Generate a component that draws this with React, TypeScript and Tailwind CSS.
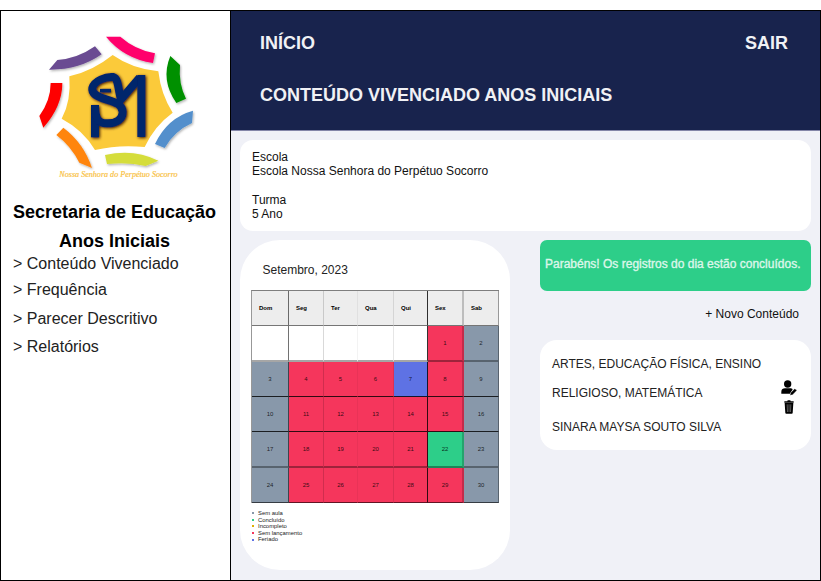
import React from "react";

const DAYS = ["Dom", "Seg", "Ter", "Qua", "Qui", "Sex", "Sab"];

const COL_BORDER = [
  "border-r border-r-black/55",
  "border-r border-r-black/15",
  "border-r border-r-black/5",
  "border-r border-r-black/10",
  "border-r border-r-black/80",
  "border-r-2 border-r-black/20",
  "border-r border-r-black/35",
];

const ROW_BORDER = [
  "border-b border-b-black/50",
  "border-b-2 border-b-black/35",
  "border-b border-b-black/80",
  "border-b border-b-black/80",
  "border-b-2 border-b-black/35",
  "border-b border-b-black/60",
];

const WEEKS: (number | null)[][] = [
  [null, null, null, null, null, 1, 2],
  [3, 4, 5, 6, 7, 8, 9],
  [10, 11, 12, 13, 14, 15, 16],
  [17, 18, 19, 20, 21, 22, 23],
  [24, 25, 26, 27, 28, 29, 30],
];

const LEGEND = [
  { label: "Sem aula", color: "bg-[#8898aa]" },
  { label: "Concluído", color: "bg-[#2dce89]" },
  { label: "Incompleto", color: "bg-[#e0b000]" },
  { label: "Sem lançamento", color: "bg-[#f5365c]" },
  { label: "Feriado", color: "bg-[#5e72e4]" },
];

function cellColor(day: number | null, col: number) {
  if (day === null) return "bg-white";
  if (day === 7) return "bg-[#5e72e4]";
  if (day === 22) return "bg-[#2dce89]";
  return col === 0 || col === 6 ? "bg-[#8898aa]" : "bg-[#f5365c]";
}

function Logo() {
  return (
    <svg className="ml-[35px] mt-[22px] block h-[150px] w-[160px]" viewBox="108 99 480 450">
      <defs>
        <filter id="soft" x="-20%" y="-20%" width="140%" height="140%">
          <feDropShadow dx="3" dy="4" stdDeviation="3" floodColor="#000" floodOpacity="0.3" />
        </filter>
        <filter id="deep" x="-20%" y="-20%" width="150%" height="150%">
          <feDropShadow dx="3" dy="3" stdDeviation="5" floodColor="#3a1500" floodOpacity="1" />
        </filter>
      </defs>
      <path
        fill="#fbca3a"
        d="M338 165Q396 206 475 214Q483 284 518 338Q463 378 434 441Q356 433 285 450Q251 391 185 356Q214 304 208 229Q277 214 338 165Z"
      />
      <g filter="url(#soft)">
        <path fill="#ff006c" d="M318 110L361 110Q405 149 465 160L459 189Q372 176 318 110Z" />
        <path fill="#6a4b92" d="M147 209L172 180Q232 176 285 139L305 163Q238 210 147 209Z" />
        <path fill="#fe0000" d="M152 249L187 249Q187 319 130 383L118 348Q152 301 152 249Z" />
        <path fill="#ff8510" d="M190 383Q252 430 276 504L238 488Q212 437 169 405Z" />
        <path fill="#d5dd3a" d="M315 465Q402 445 475 482L437 498Q385 485 321 492Z" />
        <path fill="#528fcc" d="M579 332L576 369Q522 394 494 444L465 432Q502 353 579 332Z" />
        <path fill="#009000" d="M511 168L540 195Q535 251 558 296L529 309Q481 240 511 168Z" />
      </g>
      <g filter="url(#deep)" fill="none" stroke="#03256c" strokeWidth="24">
        <path d="M285 412V315" />
        <path
          d="M285 316C285 350 292 370 319 370C350 371 368 357 368 336C367 312 343 306 318 298C290 289 274 281 277 264C283 242 318 229 340 231C356 236 354 270 363 298L419 233"
          strokeLinejoin="round"
        />
        <path d="M424 225V411" />
        <path d="M300 272H333" strokeWidth="11" />
      </g>
      <text
        x="178"
        y="532"
        textLength="355"
        lengthAdjust="spacingAndGlyphs"
        className="fill-[#f9be38] stroke-[#f9c650] stroke-[0.6px] font-['Liberation_Serif',serif] text-[24px] italic"
      >
        Nossa Senhora do Perpétuo Socorro
      </text>
    </svg>
  );
}

function UserEditIcon() {
  return (
    <svg className="block h-[16px] w-[16px]" viewBox="0 0 48 48">
      <ellipse cx="20" cy="12" rx="11" ry="11" />
      <path d="M1 41V35C1 28 6 25 12 25H27C31 25 33 26 35 28L27 41Z" />
      <path d="M27 46L29 38L41 26L48 31L35 44Z" stroke="#fff" strokeWidth="1" />
    </svg>
  );
}

function TrashIcon() {
  return (
    <svg className="block h-[14px] w-[10px]" viewBox="0 0 30 42">
      <path d="M1 4H10L11 1H19L20 4H29V8H1Z" />
      <path d="M2 9H28L26 39Q26 41 23 41H7Q4 41 4 39Z" />
      <path d="M9.5 13L10.5 36M15 13V36M20.5 13L19.5 36" fill="none" stroke="#aaa" strokeWidth="1.6" />
    </svg>
  );
}

function Sidebar() {
  return (
    <aside className="w-[231px] shrink-0 border-x border-black bg-white text-black">
      <Logo />
      <h1 className="mt-[15px] pr-[2px] text-center text-[18px] leading-[29px] font-bold">
        Secretaria de Educação
        <br />
        Anos Iniciais
      </h1>
      <nav className="-mt-px flex flex-col pl-3 text-[16px] text-[#222]">
        <a className="h-[23px] leading-[17px]">&gt; Conteúdo Vivenciado</a>
        <a className="h-[29px] leading-[23px]">&gt; Frequência</a>
        <a className="h-[28px] leading-[23px]">&gt; Parecer Descritivo</a>
        <a className="h-[28px] leading-[23px]">&gt; Relatórios</a>
      </nav>
    </aside>
  );
}

function Calendar() {
  return (
    <section className="h-[330px] w-[270px] rounded-[40px] bg-white">
      <h2 className="pt-[22px] pl-[22.5px] text-[12px] leading-[16px] text-[#222]">Setembro, 2023</h2>
      <div className="mt-[12px] ml-[11px] grid w-[248px] grid-cols-[37px_35px_34px_36px_34px_36px_35px] grid-rows-[35px_36px_35px_35px_36px_35px] border-t border-l border-t-black/50 border-l-black/40 text-[6px]">
        {DAYS.map((d, c) => (
          <div
            key={d}
            className={`flex items-center bg-[#ededed] pl-[7px] font-bold ${COL_BORDER[c]} ${ROW_BORDER[0]}`}
          >
            {d}
          </div>
        ))}
        {WEEKS.map((week, r) =>
          week.map((day, c) => (
            <div
              key={`${r}-${c}`}
              className={`flex items-center justify-center text-black/80 ${cellColor(day, c)} ${COL_BORDER[c]} ${ROW_BORDER[r + 1]}`}
            >
              {day}
            </div>
          )),
        )}
      </div>
      <ul className="mt-[7px] ml-[12px] text-[5.9px] leading-[6.6px] text-[#222]">
        {LEGEND.map((item) => (
          <li key={item.label} className="flex items-center gap-[4px]">
            <span className={`size-[2px] ${item.color}`} />
            {item.label}
          </li>
        ))}
      </ul>
    </section>
  );
}

export default function App() {
  return (
    <div className="h-[581px] w-[821px] bg-white pt-[10px] font-['Liberation_Sans',Arial,sans-serif]">
      <div className="flex h-[571px] border-y border-black">
        <Sidebar />
        <main className="flex-1 border-r border-black bg-[#f0f1f7]">
          <header className="h-[120px] border-b border-[#8486a8] bg-[#18234d] pt-[20px] pr-[32px] pl-[29px] text-[18px] leading-[24px] font-bold text-[#f0f1f5]">
            <div className="flex justify-between">
              <span>INÍCIO</span>
              <span>SAIR</span>
            </div>
            <h2 className="mt-[28px]">CONTEÚDO VIVENCIADO ANOS INICIAIS</h2>
          </header>
          <div className="px-[9px] pt-[9px]">
            <section className="h-[91px] w-[571px] rounded-[13px] bg-white pt-[10px] pl-[12px] text-[12px] leading-[14.3px] text-[#111]">
              <p>Escola</p>
              <p>Escola Nossa Senhora do Perpétuo Socorro</p>
              <p className="mt-[14.3px]">Turma</p>
              <p>5 Ano</p>
            </section>
            <div className="mt-[9px] flex gap-[30px]">
              <Calendar />
              <div className="w-[271px]">
                <div className="h-[51px] rounded-[7px] bg-[#2dce89] pt-[16px] pl-[5px] text-[12px] leading-[16px] whitespace-nowrap text-[#e2f8ee] [-webkit-text-stroke:0.35px_#d5f5e7]">
                  Parabéns! Os registros do dia estão concluídos.
                </div>
                <p className="mt-[15px] pr-[12px] text-right text-[12px] leading-[16px] text-[#111]">
                  + Novo Conteúdo
                </p>
                <section className="mt-[18px] flex h-[110px] rounded-[17px] bg-white pl-[12px] text-[12px] text-[#222]">
                  <div className="w-[229px] pt-[10px] leading-[29px]">
                    <p>ARTES, EDUCAÇÃO FÍSICA, ENSINO RELIGIOSO, MATEMÁTICA</p>
                    <p className="mt-[5px]">SINARA MAYSA SOUTO SILVA</p>
                  </div>
                  <div className="flex flex-col items-center pt-[40px] text-black">
                    <UserEditIcon />
                    <div className="mt-[4px]">
                      <TrashIcon />
                    </div>
                  </div>
                </section>
              </div>
            </div>
          </div>
        </main>
      </div>
    </div>
  );
}
